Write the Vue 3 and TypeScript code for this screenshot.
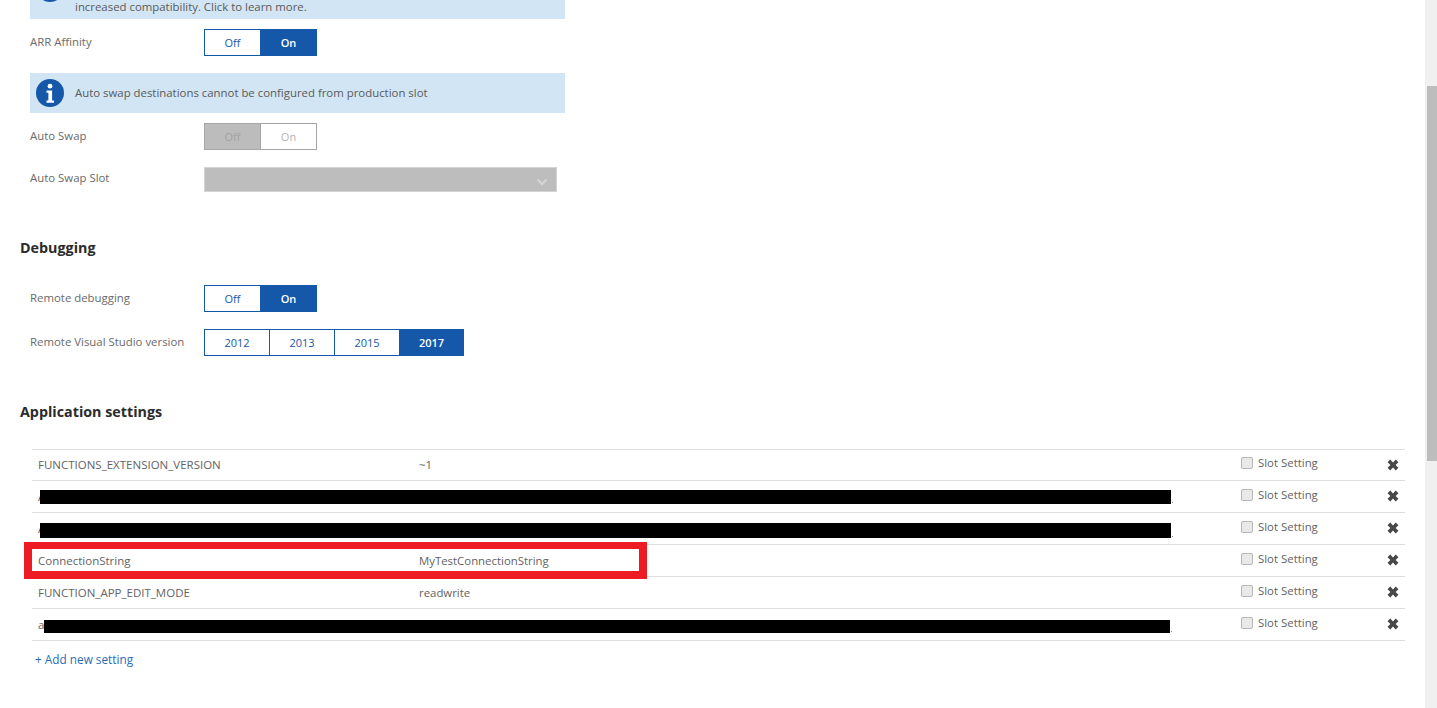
<script setup lang="ts">
interface Setting {
  name: string;
  value: string;
  redact?: 'a' | 'b' | 'c';
}

const settings: Setting[] = [
  { name: 'FUNCTIONS_EXTENSION_VERSION', value: '~1' },
  { name: 'A', value: '', redact: 'a' },
  { name: 'A', value: '', redact: 'b' },
  { name: 'ConnectionString', value: 'MyTestConnectionString' },
  { name: 'FUNCTION_APP_EDIT_MODE', value: 'readwrite' },
  { name: 'a', value: '', redact: 'c' },
];

const versions = ['2012', '2013', '2015', '2017'];
</script>

<template>
  <div class="page">
    <main class="content">
      <div class="banner banner-clipped">
        <svg class="info-icon" viewBox="0 0 28 28" aria-hidden="true">
          <circle cx="14" cy="14" r="14" fill="#1557a8" />
          <circle cx="14" cy="7.2" r="2.4" fill="#fff" />
          <path d="M10.5 11.5h5.6v10h1.9v2.2h-7.5v-2.2h1.9v-7.8h-1.9z" fill="#fff" />
        </svg>
        <span class="banner-text">increased compatibility. Click to learn more.</span>
      </div>

      <div class="form-row row-arr">
        <span class="label">ARR Affinity</span>
        <div class="seg">
          <span class="seg-item w56">Off</span>
          <span class="seg-item w55 active">On</span>
        </div>
      </div>

      <div class="banner banner-swap">
        <svg class="info-icon" viewBox="0 0 28 28" aria-hidden="true">
          <circle cx="14" cy="14" r="14" fill="#1557a8" />
          <circle cx="14" cy="7.2" r="2.4" fill="#fff" />
          <path d="M10.5 11.5h5.6v10h1.9v2.2h-7.5v-2.2h1.9v-7.8h-1.9z" fill="#fff" />
        </svg>
        <span class="banner-text">Auto swap destinations cannot be configured from production slot</span>
      </div>

      <div class="form-row row-swap">
        <span class="label">Auto Swap</span>
        <div class="seg seg-disabled">
          <span class="seg-item w56 active">Off</span>
          <span class="seg-item w55">On</span>
        </div>
      </div>

      <div class="form-row row-slot">
        <span class="label label-slot">Auto Swap Slot</span>
        <div class="select-disabled">
          <svg class="chevron" viewBox="0 0 12 8" aria-hidden="true">
            <path d="M1.5 1.5 6 6l4.5-4.5" fill="none" stroke="#d6d6d6" stroke-width="2.2" />
          </svg>
        </div>
      </div>

      <h2 class="heading heading-debug">Debugging</h2>

      <div class="form-row row-remote">
        <span class="label">Remote debugging</span>
        <div class="seg">
          <span class="seg-item w56">Off</span>
          <span class="seg-item w55 active">On</span>
        </div>
      </div>

      <div class="form-row row-version">
        <span class="label">Remote Visual Studio version</span>
        <div class="seg">
          <span
            v-for="v in versions"
            :key="v"
            class="seg-item w65"
            :class="{ active: v === '2017' }"
          >{{ v }}</span>
        </div>
      </div>

      <h2 class="heading heading-app">Application settings</h2>

      <div class="settings">
        <div v-for="s in settings" :key="s.name + s.redact" class="setting-row">
          <span class="cell cell-name">{{ s.name }}</span>
          <span class="cell">{{ s.value }}</span>
          <label class="slot">
            <span class="check"></span>
            <span>Slot Setting</span>
          </label>
          <svg class="remove" viewBox="0 0 12 12" aria-hidden="true">
            <path d="M.6 3.2 3.2.6 6 3.4 8.8.6l2.6 2.6L8.6 6l2.8 2.8-2.6 2.6L6 8.6l-2.8 2.8L.6 8.8 3.4 6z" fill="#474747" />
          </svg>
          <span v-if="s.redact" class="redact" :class="`redact-${s.redact}`"></span>
        </div>
        <div class="red-frame"></div>
      </div>

      <a class="add-link">+ Add new setting</a>
    </main>

    <aside class="scrollbar">
      <div class="thumb"></div>
    </aside>
  </div>
</template>

<style>
html,
body {
  margin: 0;
  overflow: hidden;
  background: #fff;
}
</style>

<style scoped>
.page {
  display: flex;
  height: 708px;
  overflow: hidden;
  font-family: "Open Sans", "Noto Sans", sans-serif;
  font-size: 11.4px;
  color: #636363;
}

.content {
  flex: 1;
  min-width: 0;
  padding-right: 20px;
}

.scrollbar {
  width: 10px;
  padding-left: 2px;
  background: #f0f0f0;
  flex: none;
}

.thumb {
  width: 10px;
  height: 375px;
  margin-top: 86px;
  background: #bdbdbd;
}

.banner {
  display: flex;
  width: 535px;
  margin-left: 30px;
  background: #d2e5f4;
  box-sizing: border-box;
  padding-left: 6px;
  gap: 11px;
}

.banner-clipped {
  height: 53px;
  margin-top: -34px;
}

.banner-clipped .info-icon {
  margin-top: 8px;
}

.banner-clipped .banner-text {
  align-self: flex-end;
  line-height: 12px;
  padding-bottom: 6px;
}

.banner-swap {
  height: 40px;
  margin-top: 17px;
  align-items: center;
}

.info-icon {
  width: 28px;
  height: 28px;
  flex: none;
}

.banner-text {
  line-height: 16px;
  color: #5a5a5a;
}

.form-row {
  display: flex;
  align-items: center;
  padding-left: 30px;
}

.row-arr,
.row-swap {
  margin-top: 10px;
}

.row-slot,
.row-version {
  margin-top: 17px;
}

.row-remote {
  margin-top: 27px;
}

.label {
  width: 174px;
  flex: none;
  line-height: 16px;
  margin-top: -2px;
  color: #6a6a6a;
}

.label-slot {
  margin-top: -4px;
}

.seg {
  display: flex;
  height: 27px;
  box-sizing: border-box;
  border: 1px solid #1557a8;
}

.seg-item {
  display: flex;
  align-items: center;
  justify-content: center;
  box-sizing: border-box;
  color: #1557a8;
  font-size: 11px;
  border-right: 1px solid #1557a8;
}

.seg-item:last-child {
  border-right: 0;
}

.w56 {
  width: 56px;
}

.w55 {
  width: 55px;
}

.w65 {
  width: 65px;
}

.w65:last-child {
  width: 63px;
}

.seg-item.active {
  background: #1557a8;
  color: #fff;
  font-weight: 600;
}

.seg-disabled {
  border-color: #a6a6a6;
}

.seg-disabled .seg-item {
  color: #b3b3b3;
  border-right-color: #a6a6a6;
  font-weight: 400;
}

.seg-disabled .seg-item.active {
  background: #bcbcbc;
  color: #a3a3a3;
}

.select-disabled {
  display: flex;
  align-items: center;
  justify-content: flex-end;
  width: 353px;
  height: 25px;
  box-sizing: border-box;
  padding: 5px 8px 0 0;
  background: #bdbdbd;
  border: 1px solid #d4d4d4;
}

.chevron {
  width: 12px;
  height: 8px;
}

.heading {
  margin: 0;
  padding-left: 20px;
  font-size: 14.3px;
  font-weight: 700;
  line-height: 20px;
  color: #2b2b2b;
}

.heading-debug,
.heading-app {
  margin-top: 46px;
}

.settings {
  position: relative;
  margin: 27px 0 0 32px;
  width: 1373px;
  border-top: 1px solid #ddd;
}

.setting-row {
  position: relative;
  display: grid;
  grid-template-columns: 381px 822px 146px 18px;
  align-items: center;
  height: 32px;
  box-sizing: border-box;
  padding-left: 6px;
  border-bottom: 1px solid #ddd;
}

.setting-row:first-child {
  height: 31px;
  padding-bottom: 1px;
}

.cell {
  line-height: 16px;
  white-space: nowrap;
}

.cell-name {
  font-size: 11.5px;
}

.slot {
  display: flex;
  align-items: center;
  gap: 5px;
  margin-top: -4px;
}

.check {
  width: 12px;
  height: 12px;
  box-sizing: border-box;
  border: 1px solid #b8b8b8;
  border-radius: 2px;
  background: #e9e9e9;
}

.remove {
  width: 12px;
  height: 12px;
  margin-top: -1px;
}

.setting-row:first-child .remove {
  margin-top: 1px;
}

.redact {
  position: absolute;
  background: #000;
}

.redact::after {
  content: "";
  position: absolute;
  right: -2px;
  bottom: 1px;
  width: 1px;
  height: 1px;
  background: #8a8a8a;
}

.redact-a {
  left: 8px;
  top: 9px;
  width: 1131px;
  height: 14px;
}

.redact-b {
  left: 8px;
  top: 10px;
  width: 1131px;
  height: 15px;
}

.redact-c {
  left: 12px;
  top: 11px;
  width: 1126px;
  height: 13px;
}

.red-frame {
  position: absolute;
  left: -8px;
  top: 92px;
  width: 623px;
  height: 37px;
  box-sizing: border-box;
  border-style: solid;
  border-color: #ed1c24;
  border-width: 7px 8px 8px;
  pointer-events: none;
}

.add-link {
  display: block;
  margin: 10px 0 0 35px;
  line-height: 16px;
  font-size: 11.8px;
  color: #2a6db5;
}
</style>
